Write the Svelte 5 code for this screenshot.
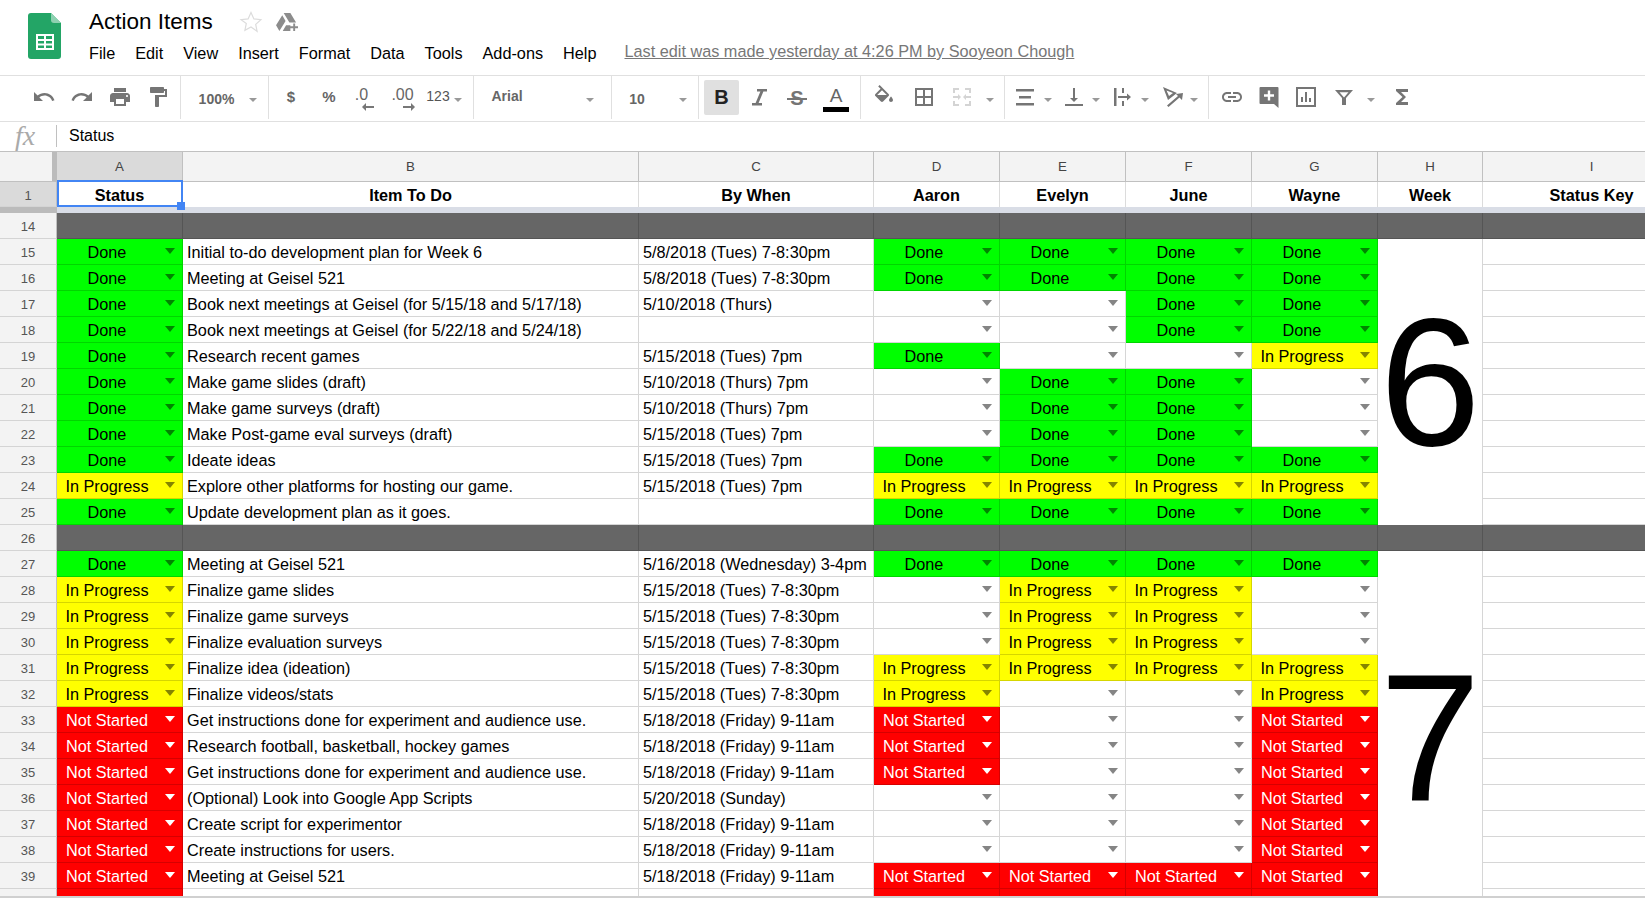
<script>
    const columns = ['A', 'B', 'C', 'D', 'E', 'F', 'G', 'H', 'I'];
    const headings = ['Status', 'Item To Do', 'By When', 'Aaron', 'Evelyn', 'June', 'Wayne', 'Week', 'Status Key'];
    const labels = { D: 'Done', P: 'In Progress', N: 'Not Started' };
    const menus = ['File', 'Edit', 'View', 'Insert', 'Format', 'Data', 'Tools', 'Add-ons', 'Help'];

    const tues830 = '5/15/2018 (Tues) 7-8:30pm';
    const tues7 = '5/15/2018 (Tues) 7pm';
    const thurs7 = '5/10/2018 (Thurs) 7pm';
    const fri = '5/18/2018 (Friday) 9-11am';
    const setup = 'Get instructions done for experiment and audience use.';

    // status, task, due date, then Aaron / Evelyn / June / Wayne
    const rows = [
        { n: 14, dark: true },
        { n: 15, s: 'D', task: 'Initial to-do development plan for Week 6', due: '5/8/2018 (Tues) 7-8:30pm', who: 'DDDD' },
        { n: 16, s: 'D', task: 'Meeting at Geisel 521', due: '5/8/2018 (Tues) 7-8:30pm', who: 'DDDD' },
        { n: 17, s: 'D', task: 'Book next meetings at Geisel (for 5/15/18 and 5/17/18)', due: '5/10/2018 (Thurs)', who: '--DD' },
        { n: 18, s: 'D', task: 'Book next meetings at Geisel (for 5/22/18 and 5/24/18)', due: '', who: '--DD' },
        { n: 19, s: 'D', task: 'Research recent games', due: tues7, who: 'D--P' },
        { n: 20, s: 'D', task: 'Make game slides (draft)', due: thurs7, who: '-DD-' },
        { n: 21, s: 'D', task: 'Make game surveys (draft)', due: thurs7, who: '-DD-' },
        { n: 22, s: 'D', task: 'Make Post-game eval surveys (draft)', due: tues7, who: '-DD-' },
        { n: 23, s: 'D', task: 'Ideate ideas', due: tues7, who: 'DDDD' },
        { n: 24, s: 'P', task: 'Explore other platforms for hosting our game.', due: tues7, who: 'PPPP' },
        { n: 25, s: 'D', task: 'Update development plan as it goes.', due: '', who: 'DDDD' },
        { n: 26, dark: true },
        { n: 27, s: 'D', task: 'Meeting at Geisel 521', due: '5/16/2018 (Wednesday) 3-4pm', who: 'DDDD' },
        { n: 28, s: 'P', task: 'Finalize game slides', due: tues830, who: '-PP-' },
        { n: 29, s: 'P', task: 'Finalize game surveys', due: tues830, who: '-PP-' },
        { n: 30, s: 'P', task: 'Finalize evaluation surveys', due: tues830, who: '-PP-' },
        { n: 31, s: 'P', task: 'Finalize idea (ideation)', due: tues830, who: 'PPPP' },
        { n: 32, s: 'P', task: 'Finalize videos/stats', due: tues830, who: 'P--P' },
        { n: 33, s: 'N', task: setup, due: fri, who: 'N--N' },
        { n: 34, s: 'N', task: 'Research football, basketball, hockey games', due: fri, who: 'N--N' },
        { n: 35, s: 'N', task: setup, due: fri, who: 'N--N' },
        { n: 36, s: 'N', task: '(Optional) Look into Google App Scripts', due: '5/20/2018 (Sunday)', who: '---N' },
        { n: 37, s: 'N', task: 'Create script for experimentor', due: fri, who: '---N' },
        { n: 38, s: 'N', task: 'Create instructions for users.', due: fri, who: '---N' },
        { n: 39, s: 'N', task: 'Meeting at Geisel 521', due: fri, who: 'NNNN' },
        // only the top few pixels of this row are on screen
        { n: '', s: 'N', task: '', due: '', who: 'NNNN', cut: true }
    ];

    const icons = {
        undo: 'M12.5 8c-2.65 0-5.05.99-6.9 2.6L2 7v9h9l-3.62-3.62c1.39-1.16 3.16-1.88 5.12-1.88 3.54 0 6.55 2.31 7.6 5.5l2.37-.78C21.08 11.03 17.15 8 12.5 8z',
        redo: 'M18.4 10.6C16.55 8.99 14.15 8 11.5 8c-4.65 0-8.58 3.03-9.96 7.22L3.9 16c1.05-3.19 4.05-5.5 7.6-5.5 1.95 0 3.73.72 5.12 1.88L13 16h9V7l-3.6 3.6z',
        print: 'M19 8H5c-1.66 0-3 1.34-3 3v6h4v4h12v-4h4v-6c0-1.66-1.34-3-3-3zm-3 11H8v-5h8v5zm3-7c-.55 0-1-.45-1-1s.45-1 1-1 1 .45 1 1-.45 1-1 1zm-1-9H6v4h12V3z',
        paint: 'M18 4V3c0-.55-.45-1-1-1H5c-.55 0-1 .45-1 1v4c0 .55.45 1 1 1h12c.55 0 1-.45 1-1V6h1v4H9v11c0 .55.45 1 1 1h2c.55 0 1-.45 1-1v-9h8V4h-3z',
        italic: 'M10 4h10v2.500h-3.600L11.600 18H15v2.500H5V18h3.600l4.800-11.500H10z',
        fill: 'M16.56 8.94L7.62 0 6.21 1.41l2.38 2.38-5.15 5.15c-.59.59-.59 1.54 0 2.12l5.5 5.5c.29.29.68.44 1.06.44s.77-.15 1.06-.44l5.5-5.5c.59-.58.59-1.53 0-2.12zM5.21 10L10 5.21 14.79 10H5.21zM19 11.5s-2 2.17-2 3.5c0 1.1.9 2 2 2s2-.9 2-2c0-1.33-2-3.5-2-3.5z',
        borders: 'M3 3v18h18V3H3zm8 16H5v-6h6v6zm0-8H5V5h6v6zm8 8h-6v-6h6v6zm0-8h-6V5h6v6z',
        merge: 'M3 3h6v2H5v3H3zM15 3h6v5h-2V5h-4zM3 16h2v3h4v2H3zM19 16h2v5h-6v-2h4zM3 11h5V9l3 3-3 3v-2H3zM21 11h-5V9l-3 3 3 3v-2h5z',
        align: 'M3 4h18v2.500H3zM6 11h12v2.500H6zM3 18h18v2.500H3z',
        valign: 'M16 13h-3V3h-2v10H8l4 4 4-4zM3 19v2h18v-2H3z',
        wrap: 'M3 3h2.500v18H3zM11 3h2v5h-2zM11 16h2v5h-2zM7 11h9V8.500l4 3.500-4 3.500V13H7z',
        rotate: 'M2 2l14 6-9 7zM5.500 5.500l2.500 5.600 4-3.100zM6 20.500l11-9.500-2-2 7-1-1 7-2.500-2.500L7.500 22z',
        link: 'M3.900 12c0-1.710 1.390-3.100 3.100-3.100h4V7H7c-2.760 0-5 2.240-5 5s2.240 5 5 5h4v-1.900H7c-1.710 0-3.100-1.390-3.100-3.100zM8 13h8v-2H8v2zm9-6h-4v1.900h4c1.710 0 3.100 1.390 3.100 3.100s-1.390 3.100-3.100 3.100h-4V17h4c2.760 0 5-2.240 5-5s-2.240-5-5-5z',
        comment: 'M3.500 2h17a1 1 0 0 1 1 1v20l-4.500-4H3.500a1 1 0 0 1-1-1V3a1 1 0 0 1 1-1zM13.200 5.500h-2.400v3.800H7v2.400h3.800v3.800h2.400v-3.800H17V9.300h-3.800z',
        chart: 'M2 2h20v20H2zM4 4v16h16V4zM7 12h2v5H7zM11 7h2v10h-2zM15 13h2v4h-2z',
        filter: 'M3 5h18l-7 8v7h-4v-7zM7.500 7.300L12 12.400l4.500-5.100z',
        sigma: 'M18 4H6v2l6.500 6L6 18v2h12v-3h-7l5-5-5-5h7z'
    };

    const sp = (w) => ({ k: 'sp', w });
    const ic = (name, w, cls = '') => ({ k: 'icon', name, w, cls });
    const sep = { k: 'sep' };
    const caret = { k: 'caret' };

    const tools = [
        ic('undo', 38), ic('redo', 38), ic('print', 38), ic('paint', 38), sp(3), sep,
        sp(18), { k: 'text', text: '100%', w: 35 }, sp(14), caret, sp(10), sep,
        sp(3), { k: 'text', text: '$', w: 38, cls: 'sym' }, { k: 'text', text: '%', w: 38, cls: 'sym' },
        { k: 'dec', text: '.0', w: 27, back: true }, sp(7), { k: 'dec', text: '.00', w: 41 }, sp(4),
        { k: 'text', text: '123', w: 22, cls: 'num' }, sp(4), caret, sp(10), sep,
        sp(18), { k: 'text', text: 'Arial', w: 30, cls: 'raised' }, sp(63), caret, sp(16), sep,
        sp(18), { k: 'text', text: '10', w: 14 }, sp(34), caret, sp(10), sep,
        sp(5), { k: 'bold', w: 35 }, ic('italic', 40), { k: 'strike', w: 36 }, { k: 'color', w: 42 }, sp(3), sep,
        sp(3), ic('fill', 40), ic('borders', 40), ic('merge', 36, 'off'), sp(5), caret, sp(9), sep,
        sp(2), ic('align', 36), caret, sp(5), ic('valign', 32), sp(1), caret, sp(6), ic('wrap', 32), sp(1), caret,
        sp(7), ic('rotate', 32), caret, sp(9), sep,
        ic('link', 46), ic('comment', 28), ic('chart', 46), ic('filter', 30), sp(7), caret, sp(10), ic('sigma', 32)
    ];
</script>

<div class="page">
    <header class="titlebar">
        <svg class="logo" viewBox="0 0 33 46" width="33" height="46">
            <path d="M3 0h20l10 10v33a3 3 0 0 1-3 3H3a3 3 0 0 1-3-3V3a3 3 0 0 1 3-3z" fill="#23a566" />
            <path d="M23 0l10 10h-7a3 3 0 0 1-3-3z" fill="#8ed1b1" />
            <path d="M8 21h18v16H8zM10 23v3h6v-3zM18 23v3h6v-3zM10 28v2.500h6V28zM18 28v2.500h6V28zM10 32.500V35h6v-2.500zM18 32.500V35h6v-2.500z" fill="#fff" fill-rule="evenodd" />
        </svg>
        <div class="doc">
            <div class="name">
                <span class="doc-title">Action Items</span>
                <svg class="star" viewBox="0 0 24 24" width="24" height="24">
                    <path d="M12 2.500l2.900 6.400 7 .8-5.200 4.700 1.400 6.900L12 17l-6.100 3.300 1.400-6.900L2.100 9.700l7-.8z" fill="none" stroke="#dcdcdc" stroke-width="1.200" />
                </svg>
                <svg class="drive" viewBox="0 0 24 22" width="23" height="21">
                    <path d="M8 1h7l6 10h-7zM6.500 3.500L0 14l3.500 6L10 9.500zM10.500 14H15v6H7z M18 12h2v3h3v2h-3v3h-2v-3h-3v-2h3z" fill="#8c8c8c" />
                </svg>
            </div>
            <nav class="menus">
                {#each menus as menu}
                    <span class="menu">{menu}</span>
                {/each}
                <span class="last-edit">Last edit was made yesterday at 4:26 PM by Sooyeon Chough</span>
            </nav>
        </div>
    </header>

    <div class="toolbar">
        {#each tools as t}
            {#if t.k === 'sep'}
                <span class="sep"></span>
            {:else if t.k === 'caret'}
                <span class="slot caret-slot"><i class="caret"></i></span>
            {:else if t.k === 'sp'}
                <span class="slot" style:width="{t.w}px"></span>
            {:else if t.k === 'icon'}
                <span class="slot" style:width="{t.w}px">
                    <svg class="icon {t.cls}" viewBox="0 0 24 24" width="24" height="24"><path d={icons[t.name]} fill-rule="evenodd" /></svg>
                </span>
            {:else if t.k === 'text'}
                <span class="slot label {t.cls ?? ''}" style:width="{t.w}px">{t.text}</span>
            {:else if t.k === 'dec'}
                <span class="slot dec" style:width="{t.w}px">
                    {t.text}
                    <svg viewBox="0 0 12 8" width="12" height="8">
                        <path d={t.back ? 'M4 0v3h8v2H4v3L0 4z' : 'M8 0v3H0v2h8v3l4-4z'} fill="#777" />
                    </svg>
                </span>
            {:else if t.k === 'bold'}
                <span class="slot bold-btn" style:width="{t.w}px">B</span>
            {:else if t.k === 'strike'}
                <span class="slot strike" style:width="{t.w}px"><span>S</span></span>
            {:else if t.k === 'color'}
                <span class="slot color" style:width="{t.w}px">A<i class="swatch"></i></span>
            {/if}
        {/each}
    </div>

    <div class="formula">
        <span class="fx">fx</span>
        <span class="fx-line"></span>
        <span class="fx-value">Status</span>
    </div>

    <div class="viewport">
        <div class="sheet">
            <div class="corner"></div>
            {#each columns as col, i}
                <div class="col-head" class:active={i === 0}>{col}</div>
            {/each}

            <div class="row-head active">1</div>
            {#each headings as heading, i}
                <div class="heading">
                    {heading}
                    {#if i === 0}
                        <span class="selection"><i class="handle"></i></span>
                    {/if}
                </div>
            {/each}

            <div class="freeze head-part"></div>
            <div class="freeze body-part"></div>

            <div class="week six">6</div>
            <div class="week seven">7</div>

            {#each rows as row}
                <div class="row-head">{row.n}</div>
                {#if row.dark}
                    {#each columns as _}
                        <div class="cell dark"></div>
                    {/each}
                {:else}
                    {@render status(row.s, row.cut)}
                    <div class="cell text">{row.task}</div>
                    <div class="cell text">{row.due}</div>
                    {#each row.who.split('') as s}
                        {@render status(s, row.cut)}
                    {/each}
                    <div class="cell key"></div>
                {/if}
            {/each}
        </div>
    </div>
</div>

{#snippet status(s, cut)}
    <div class="cell status {s}">
        <span class="value">{cut ? '' : labels[s] ?? ''}</span>
        <i class="arrow"></i>
    </div>
{/snippet}

<style>
    :global(body) {
        margin: 0;
        background: #fff;
    }

    .page {
        width: 1645px;
        height: 899px;
        overflow: hidden;
        display: flex;
        flex-direction: column;
        font-family: "Liberation Sans", Arial, sans-serif;
        color: #000;
    }

    .titlebar {
        height: 75px;
        display: flex;
        flex-shrink: 0;
    }

    .logo {
        margin: 13px 0 0 28px;
    }

    .doc {
        margin-left: 28px;
        padding-top: 8px;
    }

    .name {
        height: 28px;
        display: flex;
        align-items: center;
    }

    .doc-title {
        font-size: 22.5px;
    }

    .star {
        margin-left: 26px;
    }

    .drive {
        margin-left: 13px;
    }

    .menus {
        display: flex;
        align-items: baseline;
        margin: 3px 0 0 -10px;
        line-height: 28px;
    }

    .menu {
        padding: 0 10px;
        font-size: 16.25px;
    }

    .last-edit {
        align-self: flex-start;
        margin-left: 18px;
        line-height: 24px;
        font-size: 16.25px;
        color: #777;
        text-decoration: underline;
    }

    .toolbar {
        height: 47px;
        box-sizing: border-box;
        flex-shrink: 0;
        display: flex;
        padding-left: 25px;
        border-top: 1px solid #e0e0e0;
        border-bottom: 1px solid #e0e0e0;
    }

    .slot {
        flex-shrink: 0;
        display: flex;
        align-items: center;
        justify-content: center;
        white-space: nowrap;
    }

    .sep {
        width: 1px;
        flex-shrink: 0;
        margin-bottom: 2px;
        background: #e0e0e0;
    }

    .caret-slot {
        width: 10px;
    }

    .caret {
        width: 0;
        height: 0;
        margin-top: 2px;
        border-left: 4px solid transparent;
        border-right: 4px solid transparent;
        border-top: 4px solid #999;
    }

    .icon {
        fill: #757575;
        margin-top: -4px;
    }

    .icon.off {
        fill: #d4d4d4;
    }

    .label {
        font-size: 14px;
        font-weight: 700;
        color: #666;
    }

    .label.raised {
        padding-bottom: 6px;
    }

    .label.sym {
        padding-bottom: 4px;
        font-size: 15px;
    }

    .label.num {
        padding-bottom: 6px;
        font-weight: 400;
        color: #555;
    }

    .dec {
        flex-direction: column;
        padding-bottom: 6px;
        font-size: 16px;
        line-height: 16px;
        color: #666;
    }

    .dec svg {
        margin: 0 0 -6px 12px;
    }

    .bold-btn {
        height: 35px;
        margin-top: 4px;
        border-radius: 2px;
        background: #e0e0e0;
        font-size: 20px;
        font-weight: 700;
        color: #222;
    }

    .strike span {
        position: relative;
        font-size: 20px;
        font-weight: 700;
        color: #757575;
    }

    .strike span::after {
        content: '';
        position: absolute;
        left: -3px;
        right: -3px;
        top: 11px;
        height: 2px;
        background: #757575;
    }

    .color {
        flex-direction: column;
        font-size: 19px;
        line-height: 20px;
        color: #666;
    }

    .swatch {
        width: 26px;
        height: 5px;
        margin-top: 1px;
        background: #000;
    }

    .formula {
        height: 30px;
        box-sizing: border-box;
        flex-shrink: 0;
        display: flex;
        align-items: center;
        padding-bottom: 2px;
        border-bottom: 1px solid #c0c0c0;
    }

    .fx {
        width: 56px;
        padding-left: 15px;
        box-sizing: border-box;
        font-family: "Liberation Serif", serif;
        font-style: italic;
        font-size: 28px;
        line-height: 28px;
        color: #aaa;
    }

    .fx-line {
        width: 1px;
        height: 22px;
        background: #c0c0c0;
    }

    .fx-value {
        margin-left: 12px;
        font-size: 16px;
    }

    .viewport {
        height: 744px;
        flex-shrink: 0;
        overflow: hidden;
        border-bottom: 2px solid #d0d0d0;
    }

    .sheet {
        display: grid;
        grid-template-columns: 57px 126px 456px 235px 126px 126px 126px 126px 105px 218px;
        grid-template-rows: 30px 25px 6px;
        grid-auto-rows: 26px;
    }

    .corner {
        box-sizing: border-box;
        background: #f3f3f3;
        border-right: 5px solid #bbb;
        border-bottom: 1px solid #c0c0c0;
    }

    .col-head {
        display: flex;
        align-items: center;
        justify-content: center;
        background: #f3f3f3;
        border-right: 1px solid #c0c0c0;
        border-bottom: 1px solid #c0c0c0;
        font-size: 13.3px;
        color: #444;
    }

    .col-head.active,
    .row-head.active {
        background: #dadada;
    }

    .row-head {
        display: flex;
        align-items: center;
        justify-content: center;
        padding-top: 2px;
        box-sizing: border-box;
        background: #f3f3f3;
        border-right: 1px solid #c0c0c0;
        border-bottom: 1px solid #d4d4d4;
        font-size: 13px;
        color: #555;
    }

    .heading {
        position: relative;
        display: flex;
        align-items: center;
        justify-content: center;
        padding-top: 2px;
        border-right: 1px solid #dcdcdc;
        font-size: 16.25px;
        font-weight: 700;
    }

    .selection {
        position: absolute;
        z-index: 2;
        left: 0;
        top: -2px;
        right: -1px;
        bottom: 0;
        border: 2px solid #4285f4;
    }

    .handle {
        position: absolute;
        right: -4px;
        bottom: -5px;
        width: 8px;
        height: 8px;
        background: #4285f4;
    }

    .freeze {
        background: #d9dde6;
    }

    .freeze.head-part {
        background: #bbb;
    }

    .freeze.body-part {
        grid-column: 2 / -1;
    }

    .cell {
        box-sizing: border-box;
        min-width: 0;
        display: flex;
        align-items: center;
        overflow: hidden;
        white-space: nowrap;
        border-right: 1px solid rgba(0, 0, 0, 0.16);
        border-bottom: 1px solid rgba(0, 0, 0, 0.16);
        font-size: 16.25px;
    }

    .cell.text {
        padding: 2px 0 0 4px;
    }

    .dark {
        background: #666;
    }

    .status .value {
        width: 100px;
        flex-shrink: 0;
        padding-top: 2px;
        text-align: center;
    }

    .arrow {
        width: 0;
        height: 0;
        margin: -2px 0 0 8px;
        border-left: 5px solid transparent;
        border-right: 5px solid transparent;
        border-top: 6px solid rgba(0, 0, 0, 0.48);
    }

    .D {
        background: #0f0;
    }

    .P {
        background: #ff0;
    }

    .N {
        background: #f00;
        color: #fff;
    }

    .N .arrow {
        border-top-color: #fff;
    }

    .week {
        display: flex;
        align-items: center;
        justify-content: center;
        border-right: 1px solid rgba(0, 0, 0, 0.16);
        font-size: 182px;
        line-height: 1;
        overflow: hidden;
    }

    .six {
        grid-column: 9;
        grid-row: 5 / 16;
    }

    .seven {
        grid-column: 9;
        grid-row: 17 / 31;
        padding-top: 10px;
    }

    .key {
        grid-column: 10;
    }
</style>
